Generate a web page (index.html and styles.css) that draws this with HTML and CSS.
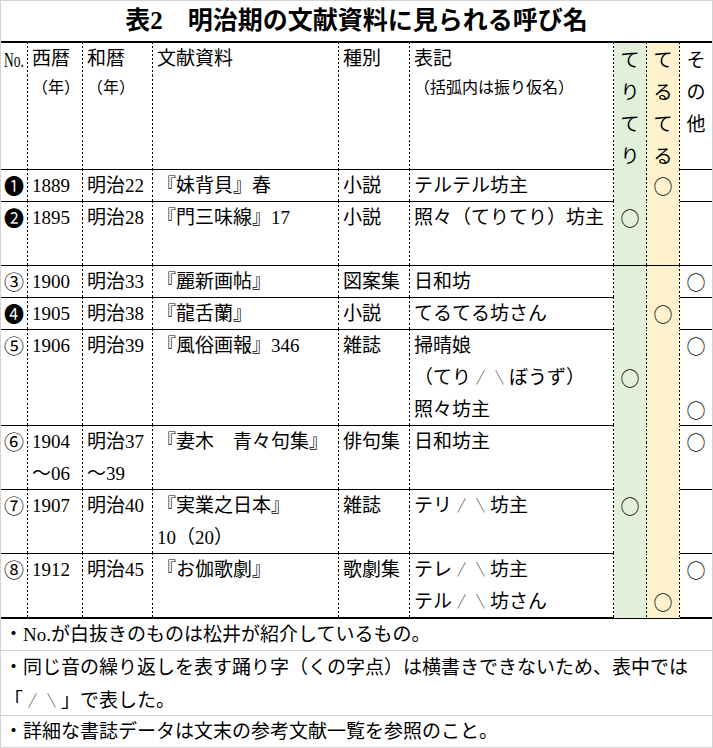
FILE: index.html
```html
<!DOCTYPE html>
<html lang="ja">
<head>
<meta charset="utf-8">
<title>表2 明治期の文献資料に見られる呼び名</title>
<link rel="stylesheet" href="styles.css">
</head>
<body>
<div class="sheet">
  <div class="title">表2　明治期の文献資料に見られる呼び名</div>

  <div class="row head">
    <div class="c num"><span class="nosign">No.</span></div>
    <div class="c">西暦<span class="sub">（年）</span></div>
    <div class="c">和暦<span class="sub">（年）</span></div>
    <div class="c">文献資料</div>
    <div class="c">種別</div>
    <div class="c">表記<span class="sub">（括弧内は振り仮名）</span></div>
    <div class="c mk g">て<br>り<br>て<br>り</div>
    <div class="c mk o">て<br>る<br>て<br>る</div>
    <div class="c mk last">そ<br>の<br>他</div>
  </div>

  <div class="row h1">
    <div class="c num">❶</div>
    <div class="c">1889</div>
    <div class="c">明治22</div>
    <div class="c">『妹背貝』春</div>
    <div class="c">小説</div>
    <div class="c">テルテル坊主</div>
    <div class="c mk g"></div>
    <div class="c mk o">○</div>
    <div class="c mk last"></div>
  </div>

  <div class="row h2">
    <div class="c num">❷</div>
    <div class="c">1895</div>
    <div class="c">明治28</div>
    <div class="c">『門三味線』17</div>
    <div class="c">小説</div>
    <div class="c">照々（てりてり）坊主</div>
    <div class="c mk g">○</div>
    <div class="c mk o"></div>
    <div class="c mk last"></div>
  </div>

  <div class="row h1">
    <div class="c num">③</div>
    <div class="c">1900</div>
    <div class="c">明治33</div>
    <div class="c">『麗新画帖』</div>
    <div class="c">図案集</div>
    <div class="c">日和坊</div>
    <div class="c mk g"></div>
    <div class="c mk o"></div>
    <div class="c mk last">○</div>
  </div>

  <div class="row h1">
    <div class="c num">❹</div>
    <div class="c">1905</div>
    <div class="c">明治38</div>
    <div class="c">『龍舌蘭』</div>
    <div class="c">小説</div>
    <div class="c">てるてる坊さん</div>
    <div class="c mk g"></div>
    <div class="c mk o">○</div>
    <div class="c mk last"></div>
  </div>

  <div class="row h3">
    <div class="c num">⑤</div>
    <div class="c">1906</div>
    <div class="c">明治39</div>
    <div class="c">『風俗画報』346</div>
    <div class="c">雑誌</div>
    <div class="c">掃晴娘<br>（てり<span class="ku">／</span><span class="ku">＼</span>ぼうず）<br>照々坊主</div>
    <div class="c mk g"><br>○</div>
    <div class="c mk o"></div>
    <div class="c mk last">○<br><br>○</div>
  </div>

  <div class="row h2">
    <div class="c num">⑥</div>
    <div class="c">1904<br>～06</div>
    <div class="c">明治37<br>～39</div>
    <div class="c">『妻木　青々句集』</div>
    <div class="c">俳句集</div>
    <div class="c">日和坊主</div>
    <div class="c mk g"></div>
    <div class="c mk o"></div>
    <div class="c mk last">○</div>
  </div>

  <div class="row h2">
    <div class="c num">⑦</div>
    <div class="c">1907</div>
    <div class="c">明治40</div>
    <div class="c">『実業之日本』<br>10（20）</div>
    <div class="c">雑誌</div>
    <div class="c">テリ<span class="ku">／</span><span class="ku">＼</span>坊主</div>
    <div class="c mk g">○</div>
    <div class="c mk o"></div>
    <div class="c mk last"></div>
  </div>

  <div class="row h2 end">
    <div class="c num">⑧</div>
    <div class="c">1912</div>
    <div class="c">明治45</div>
    <div class="c">『お伽歌劇』</div>
    <div class="c">歌劇集</div>
    <div class="c">テレ<span class="ku">／</span><span class="ku">＼</span>坊主<br>テル<span class="ku">／</span><span class="ku">＼</span>坊さん</div>
    <div class="c mk g"></div>
    <div class="c mk o"><br>○</div>
    <div class="c mk last">○</div>
  </div>

  <div class="note n1">・No.が白抜きのものは松井が紹介しているもの。</div>
  <div class="note n2">・同じ音の繰り返しを表す踊り字（くの字点）は横書きできないため、表中では<br>「<span class="ku">／</span><span class="ku">＼</span>」で表した。</div>
  <div class="note n3">・詳細な書誌データは文末の参考文献一覧を参照のこと。</div>
</div>
</body>
</html>
```

FILE: styles.css
```css
html, body {
  margin: 0;
  padding: 0;
  background: #ffffff;
}

body {
  font-family: "Liberation Serif", "Noto Sans CJK JP", serif;
  font-size: 19px;
  color: #000000;
}

.sheet {
  width: 713px;
  height: 748px;
  box-sizing: border-box;
  border-left: 1px solid #d4d4d4;
  border-right: 1px solid #d4d4d4;
  overflow: hidden;
}

.title {
  height: 43px;
  box-sizing: border-box;
  border-top: 1px solid #d4d4d4;
  border-bottom: 2px solid #000000;
  text-align: center;
  font-size: 25px;
  font-weight: bold;
  line-height: 40px;
  white-space: nowrap;
}

.row {
  display: grid;
  grid-template-columns: 27px 55px 70px 186px 71px 204px 33px 33px 32px;
  box-sizing: border-box;
  border-bottom: 1px solid #000000;
}

.head { height: 127px; }
.h1 { height: 32px; }
.h2 { height: 64px; }
.h3 { height: 96px; }
.row.end {
  height: 65px;
  border-bottom: 2px solid #000000;
}

.c {
  box-sizing: border-box;
  padding: 0 0 0 4px;
  line-height: 32px;
  white-space: nowrap;
  border-style: solid;
  border-width: 0 1px 0 0;
  border-image: repeating-linear-gradient(to bottom, #000000 0 2px, transparent 2px 4px) 1;
}

.c.last {
  border-width: 0;
  border-image: none;
}

.c.num {
  padding: 0;
  text-align: center;
  font-family: "Noto Sans CJK JP", sans-serif;
  font-size: 20px;
}

.nosign {
  display: inline-block;
  font-family: "Liberation Serif", serif;
  font-size: 21px;
  transform: scaleX(0.64);
  transform-origin: left center;
  margin-left: 3px;
  width: 22px;
  text-align: left;
}

.head .c.num {
  text-align: left;
}

.sub {
  display: block;
  font-size: 16px;
  line-height: 26px;
}

.ku {
  display: inline-block;
  font-weight: bold;
  transform: scale(0.45, 0.82);
}

.c.mk {
  padding: 0;
  text-align: center;
  font-family: "Noto Sans CJK JP", sans-serif;
}

.c.g { background: #e2efda; }
.c.o { background: #fff2cc; }

.note {
  box-sizing: border-box;
  border-bottom: 1px solid #d4d4d4;
  padding-left: 3px;
  white-space: nowrap;
}

.n1 {
  height: 32px;
  line-height: 31px;
}

.n2 {
  height: 65px;
  line-height: 33px;
}

.n3 {
  height: 32px;
  line-height: 31px;
}
```
